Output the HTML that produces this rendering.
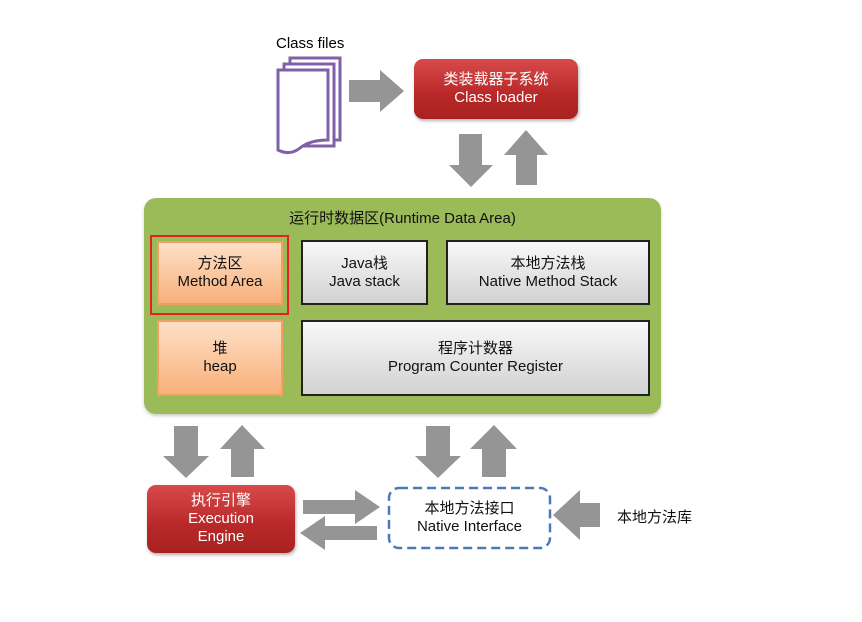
<!DOCTYPE html>
<html><head><meta charset="utf-8"><style>
body{margin:0;width:862px;height:622px;background:#fff;position:relative;overflow:hidden;font-family:"Liberation Sans","Noto Sans CJK SC",sans-serif;}
.a{position:absolute;}
.t{position:absolute;display:flex;flex-direction:column;justify-content:center;align-items:center;text-align:center;font-size:15px;line-height:18px;color:#111;box-sizing:border-box;}
.red{background:linear-gradient(#d84a4a,#b82828 60%,#a82222);color:#fff;border-radius:9px;box-shadow:1px 2px 3px rgba(0,0,0,.3);}
.gray{background:linear-gradient(#f8f8f8,#d2d2d2);border:2px solid #222;}
.org{background:linear-gradient(#fde0c8,#f9b07a);border:2px solid #f2a060;}
</style></head><body>
<div class="a" style="left:276px;top:35px;font-size:15px;">Class files</div>
<svg class="a" style="left:0;top:0" width="862" height="622">
<g fill="#fff" stroke="#8060a8" stroke-width="3">
<path d="M290 58 H340 V140 H290Z"/>
<path d="M284 64 H334 V146 H284Z"/>
<path d="M278 70 H328 V140 Q310 140 300 148 Q290 156 278 150Z"/>
</g>
<g fill="#959595">
<path d="M349 80 H380 V70 L404 91 L380 112 V102 H349Z"/>
<path d="M459 134 H482 V165 H493 L471 187 L449 165 H459Z"/>
<path d="M516 185 H537 V155 H548 L526 130 L504 155 H516Z"/>
<path d="M174 426 H198 V456 H209 L186 478 L163 456 H174Z"/>
<path d="M231 477 H254 V449 H265 L242 425 L220 449 H231Z"/>
<path d="M426 426 H450 V456 H461 L438 478 L415 456 H426Z"/>
<path d="M482 477 H506 V449 H517 L494 425 L470 449 H482Z"/>
<path d="M303 500 H355 V490 L380 507 L355 524 V514 H303Z"/>
<path d="M377 526 H325 V516 L300 533 L325 550 V540 H377Z"/>
<path d="M600 503 H580 V490 L553 515 L580 540 V527 H600Z"/>
</g>
<rect x="389" y="488" width="161" height="60" rx="10" fill="none" stroke="#4a7ab8" stroke-width="2.5" stroke-dasharray="9,5"/>
</svg>
<div class="t red" style="left:414px;top:59px;width:164px;height:60px;">类装载器子系统<br>Class loader</div>
<div class="a" style="left:144px;top:198px;width:517px;height:216px;background:#9bbb59;border-radius:12px;box-shadow:0 2px 3px rgba(0,0,0,.2);"></div>
<div class="a" style="left:144px;top:207px;width:517px;text-align:center;font-size:15px;color:#111;">运行时数据区(Runtime Data Area)</div>
<div class="a" style="left:150px;top:235px;width:139px;height:80px;border:2px solid #e82020;box-sizing:border-box;"></div>
<div class="t org" style="left:157px;top:241px;width:126px;height:64px;">方法区<br>Method Area</div>
<div class="t gray" style="left:301px;top:240px;width:127px;height:65px;">Java栈<br>Java stack</div>
<div class="t gray" style="left:446px;top:240px;width:204px;height:65px;">本地方法栈<br>Native Method Stack</div>
<div class="t org" style="left:157px;top:320px;width:126px;height:76px;">堆<br>heap</div>
<div class="t gray" style="left:301px;top:320px;width:349px;height:76px;">程序计数器<br>Program Counter Register</div>
<div class="t red" style="left:147px;top:485px;width:148px;height:68px;">执行引擎<br>Execution<br>Engine</div>
<div class="t" style="left:389px;top:488px;width:161px;height:60px;">本地方法接口<br>Native Interface</div>
<div class="a" style="left:617px;top:506px;font-size:15px;color:#111;">本地方法库</div>
</body></html>
